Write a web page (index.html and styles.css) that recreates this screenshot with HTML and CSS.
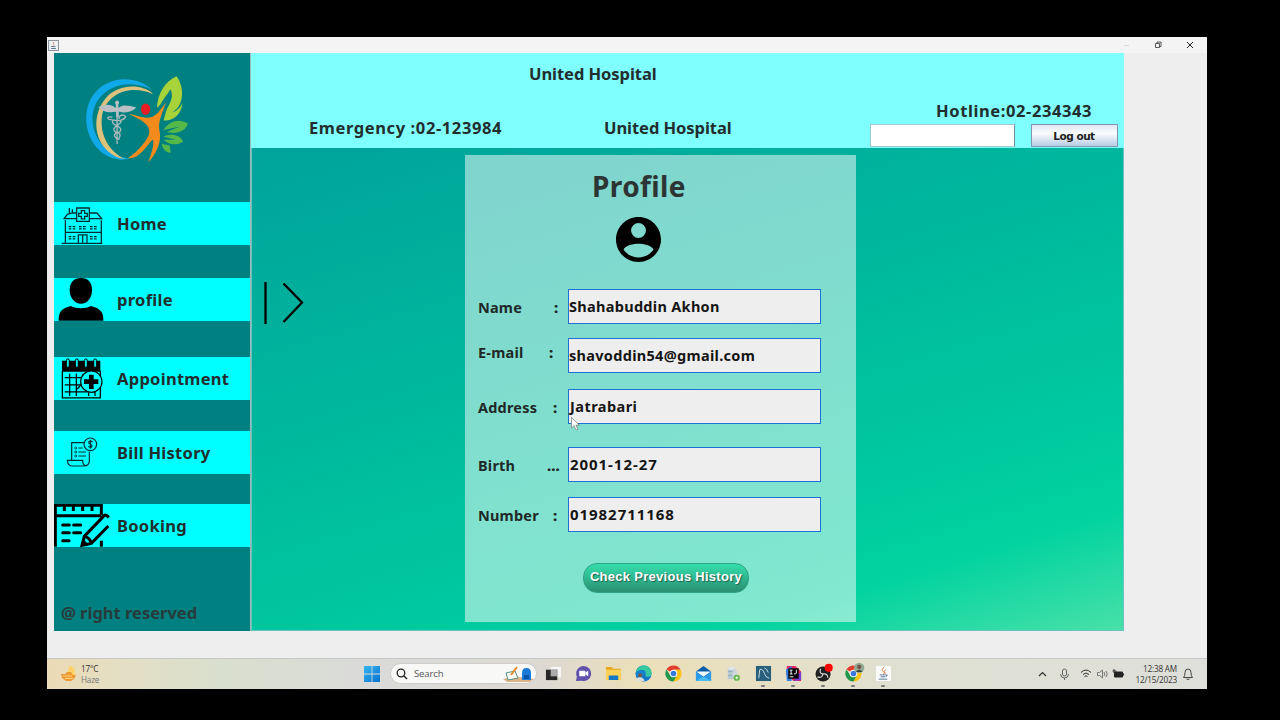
FILE: index.html
```html
<!DOCTYPE html>
<html lang="en">
<head>
<meta charset="utf-8">
<title>United Hospital</title>
<link rel="stylesheet" href="styles.css">
</head>
<body>
<div class="screen">
  <div class="titlebar">
    <svg class="java-badge" viewBox="0 0 11 11"><rect x=".5" y=".5" width="10" height="10" fill="#eef0f3" stroke="#8c959c"/><path d="M5.800 2c-1.600 1.500 1 1.800-.6 3.600" stroke="#d98a6a" fill="none"/><path d="M3 6.500h4.500M3 8.500h5" stroke="#5f7f98"/></svg>
    <svg class="window-buttons" viewBox="0 0 80 16"><path d="M6 8.500h5" stroke="#dadada"/><path d="M37.500 6.500h4v4h-4zM39 6.500v-1.500h4v4.500h-1.500" fill="none" stroke="#333" stroke-width=".8"/><path d="M69 5l6 6M75 5l-6 6" stroke="#222" fill="none"/></svg>
  </div>

  <div class="app">
    <aside class="sidebar">
      <svg class="logo" viewBox="135 135 315 265">
        <path d="M335 178C290 135 205 137 163 190C112 254 141 372 232 389C249 392 264 387 270 386C215 386 160 340 157 270C155 190 240 135 335 178Z" fill="#0fa8e8"/>
        <path d="M340 193C306 159 235 163 199 202C142 267 167 374 255 389C208 364 177 318 186 256C197 196 266 160 340 193Z" fill="#dcc27c"/>
        <path d="M175 232C195 221 213 223 227 234V223A6 6 0 1 1 235 223V234C249 223 266 227 289 233C278 244 260 252 236 245V262H228V246C201 250 188 245 175 232Z" fill="#b9bfc3"/>
        <path d="M217 262C198 258 199 270 217 270C233 275 252 272 257 260C243 249 234 262 238 268M218 272C210 286 244 288 242 300C239 316 219 306 222 296C225 286 247 282 243 272M231 262V343M231 306C246 312 240 327 229 332M231 308C216 315 225 326 238 329" fill="none" stroke="#b0babd" stroke-width="4"/>
        <ellipse cx="317" cy="238" rx="14" ry="17" fill="#ec1c24"/>
        <path d="M266 252C286 255 300 263 318 264C349 265 361 238 379 217C365 253 355 276 358 298C368 337 347 375 325 398C334 371 344 344 339 329C322 343 301 388 263 386C291 370 331 324 328 304C326 279 298 269 266 252Z" fill="#f28a1c"/>
        <path d="M351 234C353 190 376 154 410 139C437 176 431 232 396 248C413 244 423 231 428 218C425 254 400 275 371 272C376 256 378 240 388 224C400 202 397 187 391 179C381 197 372 204 362 223Z" fill="#a8d23a"/>
        <path d="M370 303C382 279 412 262 444 281C438 305 409 314 380 307L420 290L375 300ZM371 321C388 311 419 313 430 335C408 350 384 343 371 330L408 330ZM366 341C375 346 384 345 389 347L393 369C376 369 366 354 366 341L382 358Z" fill="#55b848"/>
      </svg>
      <nav class="menu">
        <a class="item home"><span class="icon"><svg viewBox="30 35 126 112" width="42" height="37.300"><g fill="none" stroke="#062c30" stroke-width="3.800"><path d="M43 75V143M151 75V143M32 144H154M43 111H151M76 53H64L49 57L39 70H76M116 53H138L152 70H116M55 38V55M64 42V55"/><path d="M77 38H115V78H77ZM82 143V119H108V143M95 119V143" /><path d="M91 46H101V54H109V63H101V71H91V63H83V54H91Z"/><path d="M53 94H74M53 101H74M84 94H105M84 101H105M117 94H138M117 101H138M53 124H74M53 131H74M117 124H138M117 131H138" stroke-dasharray="8 4"/></g></svg></span>Home</a>
        <a class="item profile"><span class="icon"><svg viewBox="25 249 137 128" width="45.700" height="42.700"><path d="M60 285C60 263 72 249 94 249S127 263 127 285C127 309 113 326 94 326S60 309 60 285ZM27 377C26 350 37 340 63 333C81 342 107 342 124 333C151 340 162 351 161 377Z" fill="#000"/></svg></span>profile</a>
        <a class="item appointment"><span class="icon"><svg viewBox="35 37 126 124" width="42" height="41.300"><path d="M38 45H153V78H38Z" fill="#000"/><path d="M39 75V157H153V75M46 96H103M46 118H100M46 139H138M61 84V151M81 84V151M101 84V108M118 141V151M137 137V151M84 130L96 116" fill="none" stroke="#000" stroke-width="3.800"/><circle cx="126" cy="108" r="32" fill="#0ff" stroke="#000" stroke-width="3.500"/><path d="M119 87H133V101H147V115H133V130H119V115H104V101H119Z"/><g fill="#00eaea" stroke="#000" stroke-width="3"><rect x="51" y="40" width="9" height="25" rx="4"/><rect x="78" y="40" width="9" height="25" rx="4"/><rect x="105" y="40" width="9" height="25" rx="4"/><rect x="133" y="40" width="9" height="25" rx="4"/></g></svg></span>Appointment</a>
        <a class="item bill"><span class="icon"><svg viewBox="48 277 96 91" width="32" height="30.300"><g fill="none" stroke="#062c30" stroke-width="3.500"><path d="M65 345V294H103M118 321V351Q116 364 102 364H66Q53 364 52 347H98Q98 361 107 364"/><circle cx="121" cy="299" r="19"/><path d="M128 292Q122 287 117 291C112 299 128 298 126 305Q122 311 115 305M121 286V312M85 310H98M85 322H108M85 334H108"/><g stroke-width="2.500"><circle cx="77" cy="310" r="3"/><circle cx="77" cy="322" r="3"/><circle cx="77" cy="334" r="3"/></g></g></svg></span>Bill History</a>
        <a class="item booking"><span class="icon"><svg viewBox="12 41 171 128" width="57" height="42.700"><g fill="none" stroke="#000" stroke-width="9"><path d="M19 169V45H157V75M19 76H157M46 45V62M73 45V62M101 45V62M129 45V62M157 151V169"/><path d="M41 104H61M74 104H95M41 127H61M74 127H95M41 151H60" stroke-linecap="round"/><path d="M178 107L127 159L99 165L106 138L166 75Q171 71 179 82M106 138Q123 142 127 159"/></g><path d="M98 167L103 147L118 162Z"/></svg></span>Booking</a>
      </nav>
      <p class="rights">@ right reserved</p>
    </aside>

    <div class="main">
      <header class="header">
        <div class="brand">United Hospital</div>
        <div class="emergency">Emergency :02-123984</div>
        <div class="center-name">United Hospital</div>
        <div class="account">
          <div class="hotline">Hotline:02-234343</div>
          <div class="account-row"><input class="search-field" type="text"><button class="logout">Log out</button></div>
        </div>
      </header>
      <main class="content">
        <svg class="expand" viewBox="0 0 40 44"><path d="M1.500 1V43M19.500 2.500L38 21.500L19.500 41" fill="none" stroke="#000" stroke-width="2.300"/></svg>
        <section class="card">
          <h1>Profile</h1>
          <svg class="avatar" viewBox="2 2 20 20"><path d="M12 2C6.480 2 2 6.480 2 12s4.480 10 10 10 10-4.480 10-10S17.520 2 12 2zm0 2.700a3.300 3.300 0 1 1 0 6.600 3.300 3.300 0 0 1 0-6.600zm0 15.300c-2.700 0-5.200-1.400-6.700-3.600 1.100-1.800 4.400-2.500 6.700-2.500s5.600.7 6.700 2.500c-1.500 2.200-4 3.600-6.700 3.600z"/></svg>
          <div class="form">
            <div class="row name"><label>Name</label><b class="colon">:</b><output>Shahabuddin Akhon</output></div>
            <div class="row email"><label>E-mail</label><b class="colon">:</b><output>shavoddin54@gmail.com</output></div>
            <div class="row address"><label>Address</label><b class="colon">:</b><output>Jatrabari</output></div>
            <div class="row birth"><label>Birth</label><b class="colon">...</b><output>2001-12-27</output></div>
            <div class="row number"><label>Number</label><b class="colon">:</b><output>01982711168</output></div>
          </div>
          <button class="history">Check Previous History</button>
        </section>
      </main>
    </div>
  </div>

  <footer class="taskbar">
    <div class="weather">
      <svg width="17" height="17" viewBox="0 0 17 17"><path d="M9 1c4 0 6 3 6 6l-1 4H4Q9 7 9 1z" fill="#ffd365"/><path d="M1 9h4l2-2h4l2 3h3l-2 4-3 2H6l-4-3z" fill="#ee9b35"/><path d="M3 11h9M5 13.500h8" stroke="#ffd27a"/></svg>
      <div class="weather-text"><span>17°C</span><span class="haze">Haze</span></div>
    </div>
    <svg class="start" viewBox="0 0 16 16"><defs><linearGradient id="win" x2="1" y2="1"><stop stop-color="#35b8f2"/><stop offset="1" stop-color="#0670cf"/></linearGradient></defs><path d="M0 0h7.600v7.600H0zM8.400 0H16v7.600H8.400zM0 8.400h7.600V16H0zM8.400 8.400H16V16H8.400z" fill="url(#win)"/></svg>
    <div class="search"><svg width="12" height="12" viewBox="0 0 12 12"><circle cx="5" cy="5" r="3.800" fill="none" stroke="#222" stroke-width="1.300"/><path d="M8 8l3 3" stroke="#222" stroke-width="1.400"/></svg><span>Search</span>
      <svg class="doodle" width="31" height="16" viewBox="0 0 31 16"><path d="M0 13Q12 9 31 13L27 16H4z" fill="#dfb283"/><path d="M3 7l9-2 3 7-10 2z" fill="#f5fbf4" stroke="#5b8f84"/><path d="M8 9l6-8" stroke="#e88b2c" stroke-width="2"/><path d="M19 14V7q0-5 4.500-5T28 7v7z" fill="#197bd7"/><path d="M21 9h5v4h-5z" fill="#0753ac"/></svg>
    </div>
    <div class="apps">
      <span><svg viewBox="0 0 18 18"><path d="M6 2h11v11H6z" fill="#f7f7f7"/><path d="M1 5h12v11H1z" fill="#272727"/><path d="M6 5h7v7H6z" fill="#aaa"/></svg></span>
      <span><svg viewBox="0 0 18 18"><path d="M9 1a8 8 0 1 1-2 15.700L1 17l1-4.500A8 8 0 0 1 9 1z" fill="#6153ad"/><rect x="4.500" y="6" width="6.500" height="6" rx="1" fill="#fff"/><path d="M11 8l3-2v6l-3-2z" fill="#fff"/></svg></span>
      <span><svg viewBox="0 0 18 18"><path d="M1 3q0-1 1-1h5l2 2h7q1 0 1 1v10H1z" fill="#e7a61e"/><path d="M1 5h16v11H1z" fill="#ffd158"/><path d="M4 16v-4q0-1 1-1h8q1 0 1 1v4z" fill="#1677c5"/></svg></span>
      <span><svg viewBox="0 0 18 18"><circle cx="9" cy="9" r="8.500" fill="#1677c9"/><path d="M1 8C2-2 18-2 17.500 9c0 4-6 4-6.500 2 2-7-6-7-10-3z" fill="#37c9a0"/><path d="M1 8Q7 2 11 8L8 12Q8 16 13 16 3 20 1 8z" fill="#1683cf"/><circle cx="5.500" cy="11" r="2.200" fill="#70594c"/><path d="M1 17q0-4 4-4t5 4z" fill="#d8dede"/></svg></span>
      <span><svg viewBox="0 0 18 18"><path d="M9 9L1.600 4.700A8.500 8.500 0 0 1 16.500 5H9z" fill="#e33b2e"/><path d="M9 9V5h7.500A8.500 8.500 0 0 1 9 17.500z" fill="#fbc116"/><path d="M9 9l3.500 2L9 17.500A8.500 8.500 0 0 1 1.600 4.700l4 6.300z" fill="#24964b"/><circle cx="9" cy="9" r="4" fill="#fff"/><circle cx="9" cy="9" r="3" fill="#3979dd"/></svg></span>
      <span><svg viewBox="0 0 18 18"><path d="M1 7l8-6 8 6v10H1z" fill="#075ba8"/><path d="M3 6h12v6H3z" fill="#0d5fa9"/><path d="M1 7h16l-8 5.500z" fill="#eef8fb"/><path d="M1 7l8 6 8-6v10H1z" fill="#2b9be9"/><path d="M1 17l8-5 8 5z" fill="#48bbf1"/></svg></span>
      <span><svg viewBox="0 0 18 18"><path d="M3 3h8v12H3z" fill="#b9c9d4"/><ellipse cx="7" cy="3.500" rx="4" ry="1.700" fill="#dce6ec"/><path d="M3 7h8M3 11h8" stroke="#8da8b9"/><path d="M8 6h5v6H8z" fill="#ccd8de"/><circle cx="12.500" cy="13.500" r="3.300" fill="#62b946"/><path d="M11 13.500h3M12.500 12v3" stroke="#fff"/></svg></span>
      <span class="running"><svg viewBox="0 0 18 18"><path d="M1 1h16v16H1z" fill="#285f7b"/><path d="M4 14L5 5q3-2 5 4 1 4 5 5M10 3q3 1 4 5" fill="none" stroke="#c7e0e7"/></svg></span>
      <span class="running"><svg viewBox="0 0 18 18"><path d="M2 1h9l6 6v10H9L1 10z" fill="#e72567"/><path d="M1 5l6-4v16H2z" fill="#3183e7"/><path d="M9 17l8-10v9z" fill="#733cd4"/><path d="M3.500 3.500h11v11h-11z" fill="#050505"/><path d="M5 5.500h3M6.500 5.500v4M5 9.500h3M12 5v3.500q0 1-2.500 1M5 12.500h4" stroke="#fff" fill="none"/></svg></span>
      <span class="running"><svg viewBox="0 0 18 18"><circle cx="8.500" cy="9.500" r="8" fill="#202020"/><path d="M8.500 9.500Q4 9 6 4M8.500 9.500q5-1 5 4M8.500 9.500q-1 5-6 3" stroke="#cfcfcf" stroke-width="1.300" fill="none"/><circle cx="14.500" cy="3" r="4.300" fill="#f00"/></svg></span>
      <span class="running"><svg viewBox="0 0 18 18"><path d="M9 9L1.600 4.700A8.500 8.500 0 0 1 16.500 5H9z" fill="#e33b2e"/><path d="M9 9V5h7.500A8.500 8.500 0 0 1 9 17.500z" fill="#fbc116"/><path d="M9 9l3.500 2L9 17.500A8.500 8.500 0 0 1 1.600 4.700l4 6.300z" fill="#24964b"/><circle cx="9" cy="9" r="4" fill="#fff"/><circle cx="9" cy="9" r="3" fill="#3979dd"/><circle cx="15" cy="3" r="5.500" fill="#93a895"/><circle cx="15" cy="2" r="2.200" fill="#735244"/><path d="M11.500 7.500q3.500-5 7 0z" fill="#35473c"/></svg></span>
      <span class="running"><svg viewBox="0 0 18 18"><rect x="1" y="1" width="16" height="16" rx="1" fill="#fafafa"/><path d="M10 2Q6 5 8.500 6.500T9 10M11 5q-2 2 0 4" fill="none" stroke="#e47638"/><path d="M5 10.500h7q2-1 0 2M6 12.500h5M4 15h9" stroke="#537697" fill="none"/></svg></span>
    </div>
    <svg class="tray" viewBox="0 0 90 16" fill="none" stroke="#333"><path d="M2 10l3.500-3.500L9 10" stroke-width="1.200"/><rect x="25.500" y="3" width="4" height="7" rx="2" stroke="#666"/><path d="M23.500 8q0 4 4 4t4-4M27.500 12v2" stroke="#666"/><path d="M44 6.500q5-5 10 0M46 8.500q3-3 6 0M47.500 10.500q1.500-1.500 3 0"/><path d="M60.500 6.500h2l3-2.500v8l-3-2.500h-2zM67 6q1.500 2 0 4M69 5q2.500 3 0 6" stroke="#777"/><path d="M77.500 6h8v5h-8zM86.500 7.500v2" fill="#222" stroke="#222"/><path d="M77 3v4M75.500 5h4"/></svg>
    <div class="clock"><span>12:38 AM</span><span>12/15/2023</span></div>
    <svg class="bell" viewBox="0 0 12 14" fill="none" stroke="#444"><path d="M1.500 10.500Q3 9 3 5.500Q3 2 6 2t3 3.500Q9 9 10.500 10.500zM4.500 12q1.500 1 3 0"/></svg>
  </footer>
</div>
<svg class="cursor" viewBox="0 0 9 14"><path d="M.5.5v10.500l2.500-2.300 2 4.300 1.800-.9-1.900-4h3.400z" fill="#fff" stroke="#777" stroke-width=".7"/></svg>
</body>
</html>
```
FILE: styles.css
```css
* { box-sizing: border-box; }
body { margin: 0; background: #000; width: 1280px; height: 720px; overflow: hidden; padding: 37px 0 0 47px; font-family: "Noto Sans", "Open Sans", sans-serif; color: #222e2e; }
svg { display: block; flex: none; overflow: visible; }
.screen { width: 1160px; height: 652px; background: #eee; display: flex; flex-direction: column; }
.titlebar { height: 16px; background: #f4f4f4; display: flex; justify-content: space-between; align-items: center; padding: 0 9px 0 1px; flex: none; }
.java-badge { width: 11px; height: 11px; }
.window-buttons { width: 80px; height: 16px; }
.app { width: 1070px; height: 578px; margin-left: 7px; display: flex; font-weight: bold; font-size: 16.5px; flex: none; white-space: nowrap; }
.sidebar { width: 197px; background: #008080; border-right: 1px solid #9fb8b8; padding-top: 22px; }
.logo { width: 105px; height: 88px; margin-left: 31px; }
.menu { margin-top: 39px; letter-spacing: .28px; }
.item { display: flex; align-items: center; height: 43px; background: #0ff; }
.icon { width: 63px; height: 43px; display: flex; align-items: center; overflow: hidden; flex: none; }
.home .icon { padding: 4px 0 0 7px; }
.profile { margin-top: 33px; }
.profile .icon { padding-left: 4px; }
.appointment { margin-top: 36px; }
.appointment .icon { padding-left: 7px; }
.bill { margin-top: 31px; }
.bill .icon { padding-left: 12px; }
.booking { margin-top: 30px; }
.booking .icon svg { margin-left: -1px; }
.rights { margin: 56px 0 0 7px; line-height: 20px; color: #263c3c; }
.main { width: 873px; display: flex; flex-direction: column; }
.header { height: 95px; background: #80ffff; display: grid; grid-template-columns: 353px 266px 254px; grid-template-rows: 42px 53px; line-height: 20px; }
.brand { grid-column: 1 / 3; padding: 11px 0 0 278px; letter-spacing: -.05px; }
.emergency { grid-row: 2; padding: 23px 0 0 58px; letter-spacing: .6px; }
.center-name { grid-row: 2; padding-top: 23px; letter-spacing: -.05px; }
.account { grid-row: 1 / 3; grid-column: 3; padding-top: 48px; }
.hotline { padding-left: 66px; letter-spacing: .6px; }
.account-row { display: flex; gap: 16px; margin-top: 3px; }
.search-field { width: 145px; height: 23px; border: 1px solid #9fc9cf; border-right-color: #778d98; background: #fff; margin: 0; padding: 0; }
.logout { width: 87px; height: 23px; border: 1px solid #8197ae; background: linear-gradient(#dfe7f3, #fbfcfe 40%, #b8cce5); padding: 0 1px 0 0; font: bold 10.5px "DejaVu Sans", sans-serif; letter-spacing: -.5px; color: #222; }
.content { flex: 1; border: 1px solid #6cc2c0; border-top: 0; background: linear-gradient(163deg, #00a39b 0%, #00ca9f 72%, #02d3a0 84%, #48e1a8 100%); display: flex; align-items: flex-start; }
.expand { width: 40px; height: 44px; margin: 133px 0 0 12px; }
.card { width: 391px; height: 467px; margin: 7px 0 0 161px; background: rgba(255,255,255,.5); display: flex; flex-direction: column; color: #202828; }
h1 { font-size: 28px; line-height: 34px; margin: 14px 0 0 127px; letter-spacing: .4px; color: #2d3434; }
.avatar { width: 45px; height: 45px; margin: 14px 0 0 151px; }
.form { margin: 27px 0 0 13px; font-size: 14.5px; }
.row { display: flex; height: 35px; line-height: 34px; }
.row label { width: 76px; padding-top: 1px; letter-spacing: .2px; }
.colon { width: 14px; padding-top: 1px; }
.row output { width: 253px; border: 1px solid #1d71d2; background: #eee; padding-left: 0; line-height: 33px; letter-spacing: .3px; color: #151515; }
.email { margin-top: 14px; }
.email label, .email .colon { margin-top: -4px; }
.email label { width: 71px; }
.email .colon { width: 19px; }
.address { margin-top: 16px; }
.address output { letter-spacing: .45px; padding-left: 1px; }
.address label, .number label { width: 75px; }
.address .colon, .number .colon { width: 15px; }
.birth { margin-top: 23px; }
.birth label { width: 69px; }
.birth .colon { width: 21px; }
.birth output, .number output { font-size: 15px; letter-spacing: .95px; padding-left: 1px; }
.number { margin-top: 15px; }
.history { width: 166px; height: 30px; margin: 31px 0 0 118px; border: 1px solid #2ca383; border-radius: 14px; background: linear-gradient(#35dfad, #2a8f70); color: #fff; padding: 0 0 3px; font: bold 13px "Liberation Sans", Arial, sans-serif; letter-spacing: .28px; text-shadow: 1px 1px 1px #225f4e; white-space: nowrap; }
.taskbar { height: 31px; margin-top: auto; border-top: 1px solid #c4c8c6; background: linear-gradient(90deg, #ecdab5 0, #e3dfc5 7%, #d9dfce 15%, #dadbd9 27%, #ddd9d2 43%, #ebdfb8 51%, #e7e0c5 62%, #dfe0d2 74%, #dfdfdb 100%); display: flex; align-items: center; font: 9px "Open Sans", "Noto Sans", sans-serif; color: #333; padding-bottom: 1px; }
.weather { width: 317px; padding-left: 13px; display: flex; gap: 4px; align-items: center; flex: none; }
.weather-text, .clock { display: flex; flex-direction: column; line-height: 11px; font-family: "Open Sans", sans-serif; font-size: 8.2px; letter-spacing: -.2px; }
.haze { color: #777; }
.start { width: 16px; height: 16px; }
.search { display: flex; align-items: center; gap: 6px; width: 147px; height: 21px; margin-left: 10px; padding: 0 2px 0 5px; background: #f8f8f6; border: 1px solid #ccc; border-radius: 11px; font-size: 9.5px; letter-spacing: -.1px; color: #555; }
.doodle { margin-left: auto; }
.apps { display: flex; margin-left: 1px; }
.apps span { width: 30px; height: 30px; display: flex; align-items: center; justify-content: center; position: relative; }
.apps svg { width: 17px; height: 17px; }
.running::after { content: ""; position: absolute; bottom: 2px; left: 13px; width: 4px; height: 2px; border-radius: 1px; background: #777; }
.tray { width: 90px; height: 16px; margin-left: 139px; }
.clock { width: 46px; text-align: right; margin-left: 4px; white-space: nowrap; }
.bell { width: 12px; height: 14px; margin-left: 5px; }
.cursor { position: absolute; left: 571px; top: 417px; width: 9px; height: 14px; }
```
